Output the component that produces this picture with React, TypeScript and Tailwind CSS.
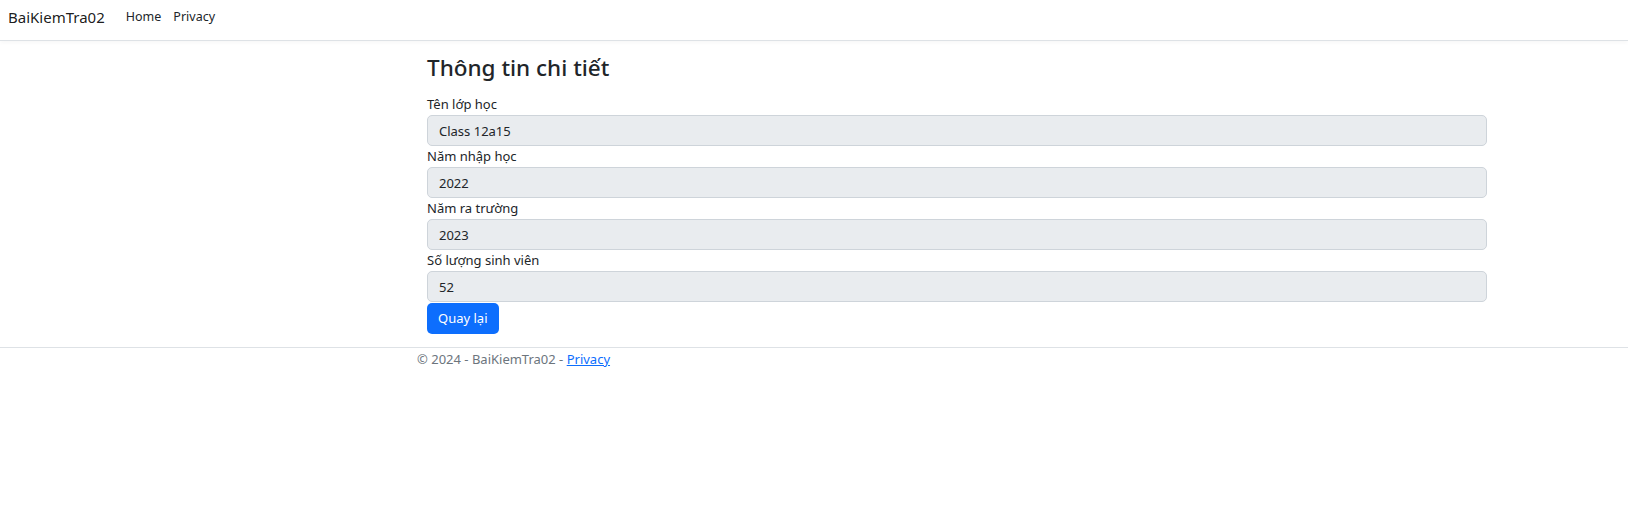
const fields = [
  { label: "Tên lớp học", value: "Class 12a15" },
  { label: "Năm nhập học", value: "2022" },
  { label: "Năm ra trường", value: "2023" },
  { label: "Số lượng sinh viên", value: "52" },
];

export default function App() {
  return (
    <div className="min-h-[514px] bg-white text-[#212529] font-['Noto_Sans',sans-serif]">
      <header className="h-[41px] border-b border-[#dee2e6] flex items-center pl-2 pb-[6px] shadow-[0_2px_4px_rgba(0,0,0,0.03)]">
        <span className="text-[15px] leading-6 text-[#000000e6]">BaiKiemTra02</span>
        <nav className="flex ml-[15px] text-[12.5px] leading-5">
          <a className="px-[6px] text-[#212529]">Home</a>
          <a className="px-[6px] text-[#212529]">Privacy</a>
        </nav>
      </header>

      <main className="pl-[427px] pt-3">
        <div className="w-[1060px]">
          <h3 className="text-[22.5px] leading-[29px] font-medium mb-3">
            Thông tin chi tiết
          </h3>
          {fields.map((f) => (
            <div key={f.label}>
              <label className="block text-[13px] leading-[21px]">{f.label}</label>
              <input
                disabled
                value={f.value}
                readOnly
                className="block w-full h-[31px] px-[11px] text-[13px] bg-[#e9ecef] border border-[#ced4da] rounded-[5px] text-[#212529]"
              />
            </div>
          ))}
          <button className="mt-px h-[31px] px-[11px] text-[13px] text-white bg-[#0d6efd] rounded-[5px]">
            Quay lại
          </button>
        </div>
      </main>

      <footer className="mt-[13px] border-t border-[#dee2e6] pt-px pl-[417px] text-[13px] leading-[21px] text-[#6c757d]">
        © 2024 - BaiKiemTra02 - <a className="text-[#0d6efd] underline">Privacy</a>
      </footer>
    </div>
  );
}
